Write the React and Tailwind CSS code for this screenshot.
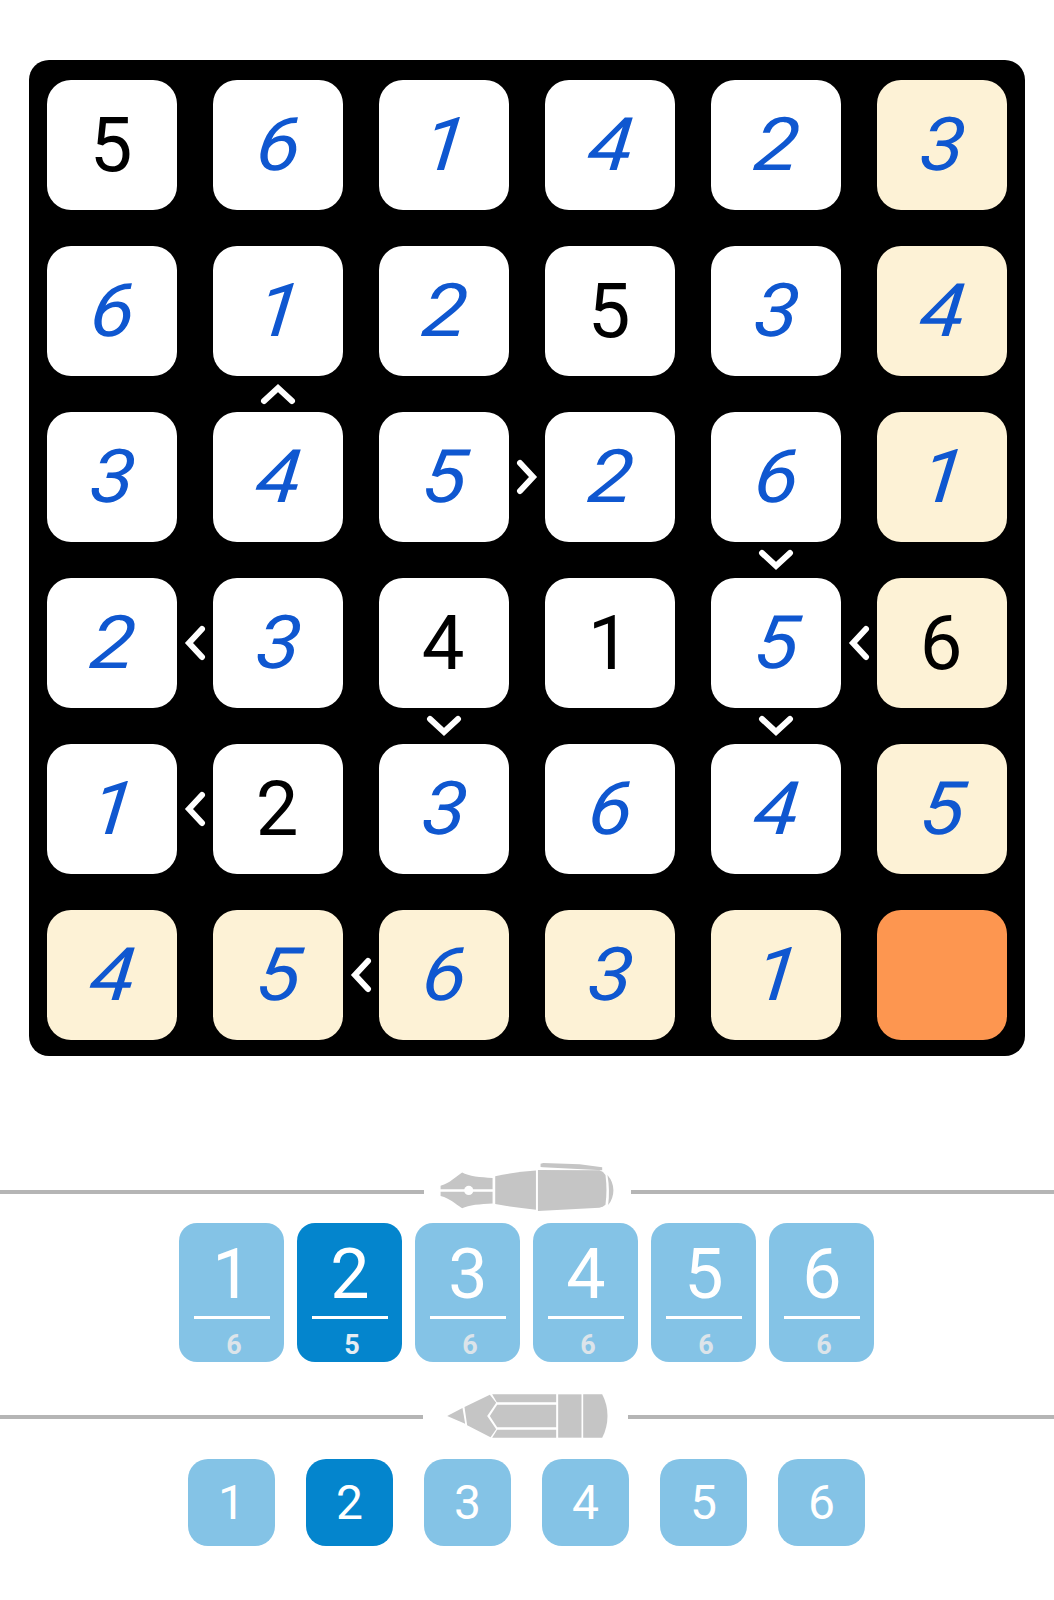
import React from 'react'

const board = [
  [{ v: 5, given: true }, { v: 6 }, { v: 1 }, { v: 4 }, { v: 2 }, { v: 3, tint: true }],
  [{ v: 6 }, { v: 1, below: 'up' }, { v: 2 }, { v: 5, given: true }, { v: 3 }, { v: 4, tint: true }],
  [{ v: 3 }, { v: 4 }, { v: 5, side: 'right' }, { v: 2 }, { v: 6, below: 'down' }, { v: 1, tint: true }],
  [{ v: 2, side: 'left' }, { v: 3 }, { v: 4, given: true, below: 'down' }, { v: 1, given: true }, { v: 5, side: 'left', below: 'down' }, { v: 6, given: true, tint: true }],
  [{ v: 1, side: 'left' }, { v: 2, given: true }, { v: 3 }, { v: 6 }, { v: 4 }, { v: 5, tint: true }],
  [{ v: 4, tint: true }, { v: 5, tint: true, side: 'left' }, { v: 6, tint: true }, { v: 3, tint: true }, { v: 1, tint: true }, { empty: true }],
]

const penCounts = [6, 5, 6, 6, 6, 6]

function Chevron({ dir }) {
  if (dir === 'up' || dir === 'down') {
    return (
      <svg width="36" height="22" viewBox="0 0 36 22" fill="none" stroke="white" strokeWidth="6" strokeLinecap="round" strokeLinejoin="miter">
        <path d={dir === 'up' ? 'M4 18 L18 5 L32 18' : 'M4 4 L18 17 L32 4'} />
      </svg>
    )
  }
  return (
    <svg width="22" height="36" viewBox="0 0 22 36" fill="none" stroke="white" strokeWidth="6" strokeLinecap="round" strokeLinejoin="miter">
      <path d={dir === 'left' ? 'M18 4 L5 18 L18 32' : 'M4 4 L17 18 L4 32'} />
    </svg>
  )
}

function Cell({ cell }) {
  const bg = cell.empty ? 'bg-[#fd9650]' : cell.tint ? 'bg-[#fdf2d6]' : 'bg-white'
  return (
    <div className={`relative h-[130px] w-[130px] rounded-[24px] flex items-center justify-center ${bg}`}>
      {cell.given && <span className="text-[76px] leading-none text-black -ml-[2px]">{cell.v}</span>}
      {!cell.given && !cell.empty && (
        <span className="italic font-normal text-[74px] leading-none text-[#0f57d0] -mt-[1px] ml-[3px] scale-x-110 -skew-x-6">{cell.v}</span>
      )}
      {cell.side && (
        <div className="absolute left-full top-0 bottom-0 w-[36px] flex items-center justify-center">
          <Chevron dir={cell.side} />
        </div>
      )}
      {cell.below && (
        <div className="absolute top-full inset-x-0 h-[36px] flex items-center justify-center">
          <Chevron dir={cell.below} />
        </div>
      )}
    </div>
  )
}

function PenIcon() {
  return (
    <svg width="175" height="49" viewBox="180 68 525 148" fill="#c5c5c5" className="shrink-0 mx-[16px]">
      <path d="M180 137 C210 128 225 110 245 97 C265 108 300 112 337 113 L337 147 L180 147 Z" />
      <path d="M180 155 L337 155 L337 190 C300 192 265 194 245 205 C225 192 210 176 180 168 Z" />
      <circle cx="265" cy="151" r="14" fill="white" />
      <path d="M345 108 Q400 96 468 91 L468 209 Q400 202 345 192 Z" />
      <path d="M474 89 L660 90 Q672 94 678 104 Q684 150 678 194 Q672 200 660 203 L474 213 Z" />
      <path d="M684 104 Q702 125 702 150 Q702 175 686 195 Q692 150 684 104 Z" />
      <path d="M482 70 L490 68 L600 72 L668 81 L668 90 L490 81 L482 80 Z" />
    </svg>
  )
}

function PencilIcon() {
  return (
    <svg width="161" height="44" viewBox="200 74 482 132" fill="#c5c5c5" className="shrink-0 ml-[24px] mr-[20px]">
      <path d="M200 140 L246 116 L254 163 Z" />
      <path d="M252 113 L328 76 L347 100 L320 140 L347 180 L330 204 L260 168 Z" />
      <path d="M335 75 L527 75 L527 99 L349 99 Z" />
      <path d="M328 140 L350 106 L527 106 L527 174 L350 174 Z" />
      <path d="M350 181 L527 181 L527 205 L335 205 Z" />
      <rect x="533" y="75" width="70" height="130" />
      <path d="M608 75 L665 75 Q681 105 681 140 Q681 175 665 205 L608 205 Z" />
    </svg>
  )
}

export default function App() {
  return (
    <div className="min-h-[1600px] bg-white font-['Roboto',sans-serif]">
      <div className="pt-[60px] px-[29px]">
        <div className="bg-black rounded-[20px] pt-[20px] pb-[16px] px-[18px] grid grid-cols-6 gap-[36px]">
          {board.flat().map((cell, i) => (
            <Cell key={i} cell={cell} />
          ))}
        </div>
      </div>

      <div className="mt-[107px] flex items-center h-[49px]">
        <div className="flex-1 h-[4px] mt-[8px] bg-[#b5b5b5]" />
        <PenIcon />
        <div className="flex-1 h-[4px] mt-[8px] bg-[#b5b5b5]" />
      </div>

      <div className="mt-[11px] pr-[1px] flex justify-center gap-[13px]">
        {penCounts.map((count, i) => (
          <div
            key={i}
            className={`w-[105px] h-[139px] rounded-[18px] flex flex-col items-center ${i === 1 ? 'bg-[#0485cd]' : 'bg-[#84c3e6]'}`}
          >
            <div className="h-[91px] pt-[10px] ml-[1px] flex items-center text-[70px] font-normal leading-none text-white">{i + 1}</div>
            <div className="mt-[2px] w-[76px] h-[3px] bg-white" />
            <div className={`mt-[13px] ml-[5px] text-[27px] font-bold leading-none ${i === 1 ? 'text-[#e6edf3]' : 'text-[#dce4ea]'}`}>{count}</div>
          </div>
        ))}
      </div>

      <div className="mt-[32px] flex items-center h-[44px]">
        <div className="w-[423px] h-[4px] mt-[2px] bg-[#b5b5b5]" />
        <PencilIcon />
        <div className="flex-1 h-[4px] mt-[2px] bg-[#b5b5b5]" />
      </div>

      <div className="mt-[21px] pr-[1px] flex justify-center gap-[31px]">
        {[1, 2, 3, 4, 5, 6].map((n) => (
          <div
            key={n}
            className={`w-[87px] h-[87px] rounded-[20px] flex items-center justify-center text-[48px] font-normal leading-none text-white ${n === 2 ? 'bg-[#0485cd]' : 'bg-[#84c3e6]'}`}
          >
            {n}
          </div>
        ))}
      </div>
    </div>
  )
}
